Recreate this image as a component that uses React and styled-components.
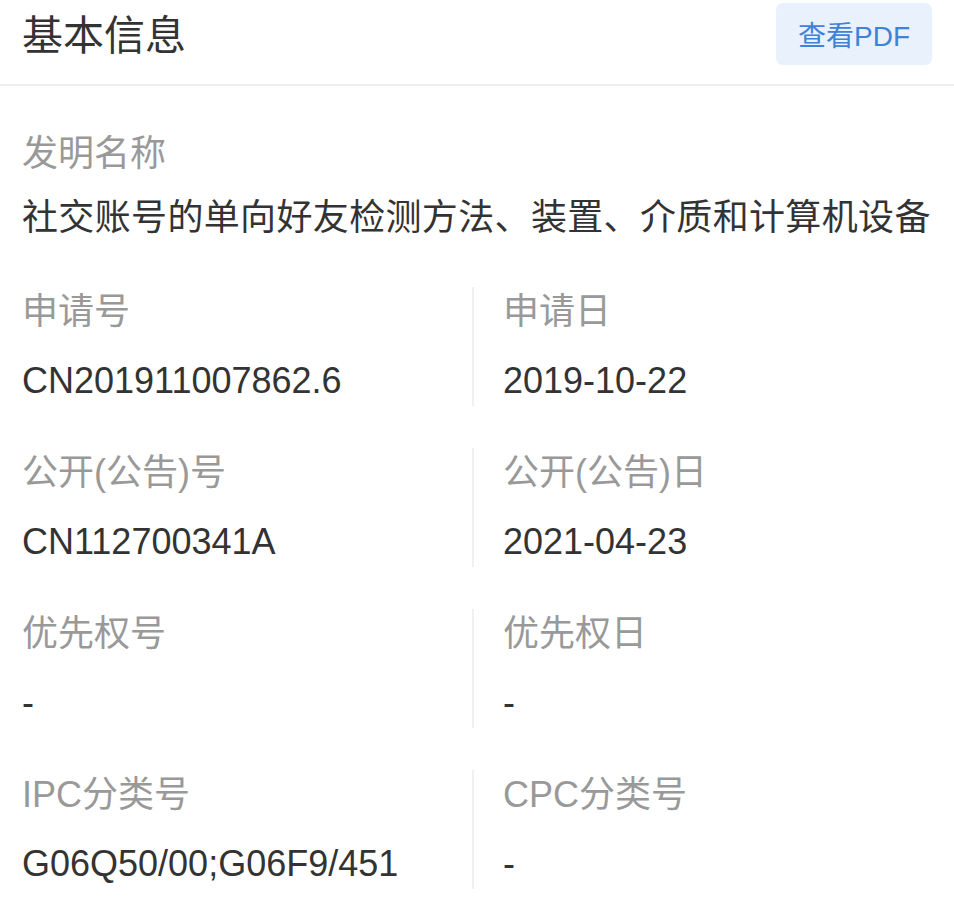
import { Fragment } from "react";
import styled, { createGlobalStyle } from "styled-components";

const GlobalStyle = createGlobalStyle`
  html, body {
    margin: 0;
    padding: 0;
    background: #fff;
  }
  body {
    font-family: "Liberation Sans", "Noto Sans CJK SC", sans-serif;
  }
`;

const Page = styled.div`
  width: 954px;
  background: #fff;
`;

const Header = styled.div`
  height: 84px;
  display: flex;
  align-items: center;
  justify-content: space-between;
  padding: 0 22px;
  border-bottom: 2px solid #eeeeee;
`;

const Title = styled.h1`
  margin: -11px 0 0;
  font-size: 41px;
  font-weight: 400;
  color: #333;
  line-height: 1;
`;

const PdfButton = styled.button`
  width: 156px;
  height: 62px;
  margin-top: -16px;
  border: none;
  border-radius: 7px;
  background: #e8f1fc;
  color: #3f82d8;
  font-family: inherit;
  font-size: 28px;
  cursor: pointer;
`;

const Body = styled.div`
  padding: 43px 22px 0;
`;

const Block = styled.div`
  display: flex;
  flex-direction: column;
  gap: 14px;
  margin-bottom: 44px;
`;

const Label = styled.div`
  font-size: 36px;
  line-height: 50px;
  color: #999;
`;

const Value = styled.div`
  font-size: 36px;
  line-height: 50px;
  letter-spacing: ${(p) => (p.$wide ? "0.35px" : "0")};
  color: #333;
  white-space: nowrap;
`;

const Grid = styled.div`
  display: grid;
  grid-template-columns: 452px 1fr;
  row-gap: 42px;
`;

const Cell = styled.div`
  display: flex;
  flex-direction: column;
  gap: 19px;
  ${(p) =>
    p.$left
      ? "border-right: 2px solid #f0f0f0;"
      : "padding-left: 29px;"}
`;

const rows = [
  ["申请号", "CN201911007862.6", "申请日", "2019-10-22"],
  ["公开(公告)号", "CN112700341A", "公开(公告)日", "2021-04-23"],
  ["优先权号", "-", "优先权日", "-"],
  ["IPC分类号", "G06Q50/00;G06F9/451", "CPC分类号", "-"],
];

export default function App() {
  return (
    <>
      <GlobalStyle />
      <Page>
        <Header>
          <Title>基本信息</Title>
          <PdfButton>查看PDF</PdfButton>
        </Header>
        <Body>
          <Block>
            <Label>发明名称</Label>
            <Value $wide>社交账号的单向好友检测方法、装置、介质和计算机设备</Value>
          </Block>
          <Grid>
            {rows.map(([l1, v1, l2, v2]) => (
              <Fragment key={l1}>
                <Cell $left>
                  <Label>{l1}</Label>
                  <Value>{v1}</Value>
                </Cell>
                <Cell>
                  <Label>{l2}</Label>
                  <Value>{v2}</Value>
                </Cell>
              </Fragment>
            ))}
          </Grid>
        </Body>
      </Page>
    </>
  );
}
